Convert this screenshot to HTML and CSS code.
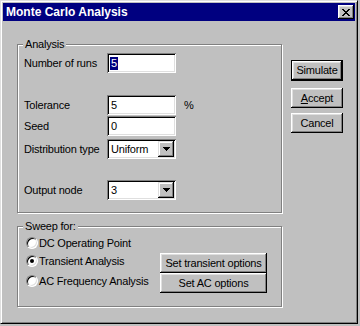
FILE: index.html
```html
<!DOCTYPE html>
<html lang="en">
<head>
  <meta charset="UTF-8">
  <title>Monte Carlo Analysis</title>
  <link rel="stylesheet" href="styles.css">
</head>
<body>
  <div class="window">
    <div class="titlebar">
      <span class="title">Monte Carlo Analysis</span>
      <span class="close-btn">
        <svg width="8" height="7" viewBox="0 0 8 7"><path d="M0 0h2v1h-2z M6 0h2v1h-2z M1 1h2v1h-2z M5 1h2v1h-2z M2 2h4v1h-4z M3 3h2v1h-2z M2 4h4v1h-4z M1 5h2v1h-2z M5 5h2v1h-2z M0 6h2v1h-2z M6 6h2v1h-2z" fill="#000"/></svg>
      </span>
    </div>

    <div class="content">
      <div class="main">
        <div class="group analysis">
          <span class="legend">Analysis</span>
          <div class="row">
            <span class="label">Number of runs</span>
            <div class="field"><span class="selected">5</span></div>
          </div>
          <div class="row row-tol">
            <span class="label">Tolerance</span>
            <div class="field">5</div>
            <span class="unit">%</span>
          </div>
          <div class="row row-seed">
            <span class="label">Seed</span>
            <div class="field">0</div>
          </div>
          <div class="row row-dist">
            <span class="label">Distribution type</span>
            <div class="field combo">
              <span class="combo-text">Uniform</span>
              <span class="drop-btn"><svg width="7" height="4" viewBox="0 0 7 4"><path d="M0 0h7v1h-7z M1 1h5v1h-5z M2 2h3v1h-3z M3 3h1v1h-1z" fill="#000"/></svg></span>
            </div>
          </div>
          <div class="row row-out">
            <span class="label">Output node</span>
            <div class="field combo">
              <span class="combo-text">3</span>
              <span class="drop-btn"><svg width="7" height="4" viewBox="0 0 7 4"><path d="M0 0h7v1h-7z M1 1h5v1h-5z M2 2h3v1h-3z M3 3h1v1h-1z" fill="#000"/></svg></span>
            </div>
          </div>
        </div>

        <div class="group sweep">
          <span class="legend">Sweep for:</span>
          <div class="sweep-grid">
            <div class="radio"><span class="radio-dot"></span>DC Operating Point</div>
            <div></div>
            <div class="radio"><span class="radio-dot checked"></span>Transient Analysis</div>
            <div class="btn wide">Set transient options</div>
            <div class="radio"><span class="radio-dot"></span>AC Frequency Analysis</div>
            <div class="btn wide">Set AC options</div>
          </div>
        </div>
      </div>

      <div class="side">
        <div class="btn default">Simulate</div>
        <div class="btn accept"><u>A</u>ccept</div>
        <div class="btn cancel">Cancel</div>
      </div>
    </div>
  </div>
</body>
</html>
```

FILE: styles.css
```css
html, body {
  margin: 0;
  padding: 0;
  background: #c0c0c0;
}
body {
  font-family: 'Liberation Sans', Arial, sans-serif;
  font-size: 11px;
  letter-spacing: -0.2px;
  color: #000;
}
.window {
  width: 358px;
  height: 324px;
  box-sizing: border-box;
  background: #c0c0c0;
  border: 1px solid;
  border-color: #dfdfdf #000 #000 #dfdfdf;
  box-shadow: inset 1px 1px #fff, inset -1px -1px #808080;
  padding: 2px;
}
.titlebar {
  height: 18px;
  background: #000080;
  color: #fff;
  display: flex;
  align-items: center;
  justify-content: space-between;
  padding: 0 1px 0 3px;
}
.title {
  font-weight: bold;
  font-size: 12px;
  letter-spacing: 0;
}
.close-btn {
  width: 16px;
  height: 14px;
  box-sizing: border-box;
  background: #c0c0c0;
  display: flex;
  align-items: center;
  justify-content: center;
  box-shadow: inset -1px -1px #000, inset 1px 1px #fff, inset -2px -2px #808080, inset 2px 2px #dfdfdf;
}

/* --- layout --- */
.content {
  display: flex;
  padding: 23px 0 0 14px;
}
.main {
  display: flex;
  flex-direction: column;
  gap: 13px;
}
.side {
  margin-left: 9px;
  padding-top: 16px;
  display: flex;
  flex-direction: column;
}

/* --- group boxes --- */
.group {
  position: relative;
  width: 265px;
  box-sizing: border-box;
  border: 1px solid #808080;
  box-shadow: inset 1px 1px #fff, 1px 1px #fff;
}
.group .legend {
  position: absolute;
  top: -7px;
  left: 5px;
  padding: 0 2px;
  line-height: 13px;
  background: #c0c0c0;
}
.analysis {
  height: 169px;
  padding: 8px 0 0 6px;
}
.sweep {
  height: 81px;
  padding: 8px 0 0 8px;
}

/* --- analysis rows --- */
.row {
  display: flex;
  align-items: center;
  height: 20px;
}
.row-tol { margin-top: 22px; }
.row-seed { margin-top: 1px; }
.row-dist { margin-top: 3px; }
.row-out { margin-top: 21px; }
.label {
  width: 83px;
}
.unit {
  margin-left: 8px;
}
.field {
  width: 69px;
  height: 20px;
  box-sizing: border-box;
  background: #fff;
  box-shadow: inset 1px 1px #808080, inset -1px -1px #fff, inset 2px 2px #000, inset -2px -2px #dfdfdf;
  padding: 0 2px 0 4px;
  display: flex;
  align-items: center;
  line-height: 13px;
}
.selected {
  background: #000080;
  color: #fff;
  margin-left: -1px;
  padding: 0 1px;
}
.combo {
  justify-content: space-between;
  padding-right: 2px;
}
.drop-btn {
  width: 16px;
  height: 16px;
  box-sizing: border-box;
  background: #c0c0c0;
  display: flex;
  align-items: center;
  justify-content: center;
  box-shadow: inset -1px -1px #000, inset 1px 1px #dfdfdf, inset -2px -2px #808080, inset 2px 2px #fff;
}

/* --- sweep --- */
.sweep-grid {
  display: grid;
  grid-template-columns: 134px 107px;
  grid-template-rows: 18px 20px 20px;
}
.radio {
  display: flex;
  align-items: center;
  height: 12px;
  margin-top: 2px;
  line-height: 12px;
}
.radio-dot {
  width: 12px;
  height: 12px;
  box-sizing: border-box;
  border-radius: 50%;
  background: #fff;
  border: 1px solid;
  border-color: #808080 #fff #fff #808080;
  box-shadow: inset 1px 1px #000, inset -1px -1px #dfdfdf;
  margin-right: 1px;
  display: flex;
  align-items: center;
  justify-content: center;
}
.radio-dot.checked::after {
  content: '';
  width: 4px;
  height: 4px;
  border-radius: 50%;
  background: #000;
}

/* --- buttons --- */
.btn {
  box-sizing: border-box;
  background: #c0c0c0;
  display: flex;
  align-items: center;
  justify-content: center;
  box-shadow: inset -1px -1px #000, inset 1px 1px #fff, inset -2px -2px #808080, inset 2px 2px #dfdfdf;
  width: 52px;
  height: 20px;
  line-height: 13px;
}
.btn.wide {
  width: 107px;
}
.btn.default {
  height: 21px;
  border: 1px solid #000;
}
.btn.accept { margin-top: 7px; }
.btn.cancel { margin-top: 5px; }
```
